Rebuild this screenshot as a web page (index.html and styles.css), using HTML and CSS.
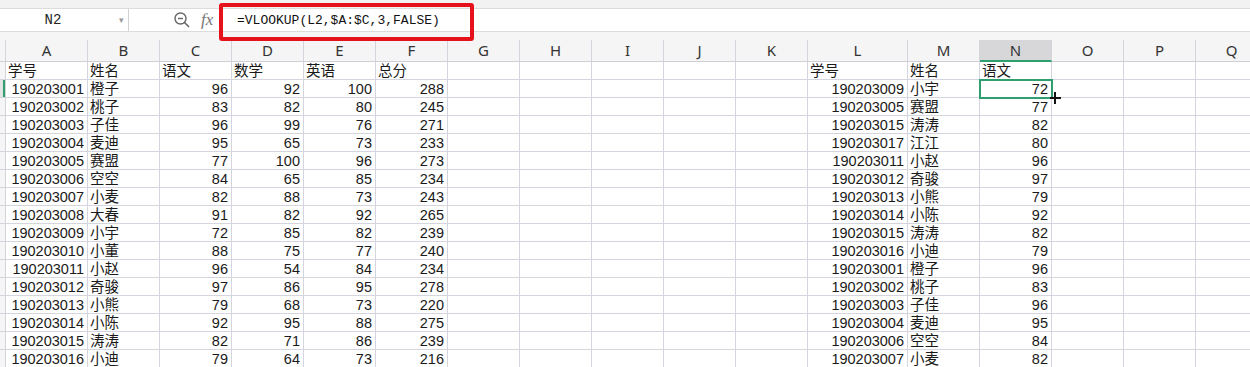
FILE: index.html
```html
<!DOCTYPE html>
<html lang="zh-CN">
<head>
    <meta charset="UTF-8">
    <meta name="viewport" content="width=device-width, initial-scale=1.0">
    <title>VLOOKUP</title>
    <link rel="stylesheet" href="styles.css">
</head>
<body>
    <div class="toolbar"></div>

    <div class="formula-row">
        <div class="name-box">
            <span class="cell-ref">N2</span>
            <span class="drop">&#9662;</span>
        </div>
        <div class="formula-tools">
            <svg class="zoom-icon" width="18" height="18" viewBox="0 0 18 18">
                <circle cx="7.5" cy="7.5" r="5.5" fill="none" stroke="#666" stroke-width="1.4"/>
                <line x1="5" y1="7.5" x2="10" y2="7.5" stroke="#666" stroke-width="1.4"/>
                <line x1="11.5" y1="11.5" x2="16" y2="16" stroke="#666" stroke-width="1.6"/>
            </svg>
            <span class="fx">fx</span>
        </div>
        <div class="formula-input">=VLOOKUP(L2,$A:$C,3,FALSE)</div>
    </div>

    <div class="head-gap"></div>

    <div id="sheet" class="sheet"></div>

    <!-- red note around the formula -->
    <div class="annotation"></div>

    <script>
        const columns = ['A','B','C','D','E','F','G','H','I','J','K','L','M','N','O','P','Q'];

        const scores = [
            ['学号','姓名','语文','数学','英语','总分'],
            [190203001,'橙子',96,92,100,288],
            [190203002,'桃子',83,82,80,245],
            [190203003,'子佳',96,99,76,271],
            [190203004,'麦迪',95,65,73,233],
            [190203005,'赛盟',77,100,96,273],
            [190203006,'空空',84,65,85,234],
            [190203007,'小麦',82,88,73,243],
            [190203008,'大春',91,82,92,265],
            [190203009,'小宇',72,85,82,239],
            [190203010,'小董',88,75,77,240],
            [190203011,'小赵',96,54,84,234],
            [190203012,'奇骏',97,86,95,278],
            [190203013,'小熊',79,68,73,220],
            [190203014,'小陈',92,95,88,275],
            [190203015,'涛涛',82,71,86,239],
            [190203016,'小迪',79,64,73,216]
        ];

        const lookup = [
            ['学号','姓名','语文'],
            [190203009,'小宇',72],
            [190203005,'赛盟',77],
            [190203015,'涛涛',82],
            [190203017,'江江',80],
            [190203011,'小赵',96],
            [190203012,'奇骏',97],
            [190203013,'小熊',79],
            [190203014,'小陈',92],
            [190203015,'涛涛',82],
            [190203016,'小迪',79],
            [190203001,'橙子',96],
            [190203002,'桃子',83],
            [190203003,'子佳',96],
            [190203004,'麦迪',95],
            [190203006,'空空',84],
            [190203007,'小麦',82]
        ];

        const sheet = document.getElementById('sheet');

        function addCell(cls, value) {
            const div = document.createElement('div');
            div.className = cls;
            if (value !== undefined && value !== '') div.textContent = value;
            sheet.appendChild(div);
            return div;
        }

        // column letters
        addCell('corner');
        columns.forEach(col => {
            addCell(col === 'N' ? 'col-head on' : 'col-head', col);
        });

        // rows
        scores.forEach((left, i) => {
            addCell(i === 1 ? 'row-head on' : 'row-head');
            const right = lookup[i] || [];
            const values = [...left, '', '', '', '', '', ...right, '', '', ''];
            values.forEach((v, c) => {
                let cls = typeof v === 'number' ? 'cell num' : 'cell';
                if (i === 1 && c === 13) cls += ' active';
                addCell(cls, v);
            });
        });
    </script>
</body>
</html>
```

FILE: styles.css
```css
* {
    box-sizing: border-box;
    margin: 0;
    padding: 0;
}

body {
    position: relative;
    width: 1250px;
    height: 367px;
    overflow: hidden;
    background: #fff;
    color: #1a1a1a;
    font-family: 'Liberation Sans', 'Noto Sans CJK SC', sans-serif;
}

.toolbar {
    height: 9px;
    background: #f2f2f2;
    border-bottom: 1px solid #dcdcdc;
}

.formula-row {
    display: flex;
    align-items: center;
    height: 23px;
    background: #fff;
    border-bottom: 1px solid #dcdcdc;
}

.name-box {
    display: flex;
    align-items: center;
    width: 129px;
    height: 100%;
    border-right: 1px solid #d2d2d2;
}

.cell-ref {
    width: 100px;
    padding-left: 6px;
    text-align: center;
    font-family: 'Liberation Mono', monospace;
    font-size: 14px;
    color: #222;
}

.drop {
    margin-left: 19px;
    font-size: 9px;
    color: #999;
}

.formula-tools {
    display: flex;
    align-items: center;
    gap: 10px;
    padding-left: 44px;
    width: 90px;
}

.zoom-icon {
    flex: none;
}

.fx {
    font-family: 'Liberation Serif', serif;
    font-style: italic;
    font-size: 17px;
    color: #777;
}

.formula-input {
    padding-left: 18px;
    font-family: 'Liberation Mono', monospace;
    font-size: 13px;
    color: #111;
}

.head-gap {
    height: 8px;
    background: #f5f5f5;
}

.sheet {
    display: grid;
    grid-template-columns: 6px 82px repeat(10, 72px) 100px repeat(5, 72px);
    grid-template-rows: 22px;
    grid-auto-rows: 18px;
}

.corner,
.col-head {
    background: #f5f5f5;
    border-right: 1px solid #d4d4dd;
    border-bottom: 1px solid #cfcfd8;
}

.col-head {
    text-align: center;
    font-family: 'Noto Sans', sans-serif;
    font-size: 15px;
    line-height: 21px;
    color: #333;
}

.col-head.on {
    background: #d7d7da;
    border-bottom: 2px solid #2f9f6f;
}

.row-head {
    background: #f5f5f5;
    border-right: 1px solid #d4d4dd;
    border-bottom: 1px solid #d4d4dd;
}

.row-head.on {
    background: #e4e4e4;
    box-shadow: inset -2px 0 0 #2f9f6f;
}

.cell {
    padding: 0 2px;
    border-right: 1px solid #d5d5e0;
    border-bottom: 1px solid #d5d5e0;
    font-size: 14.5px;
    line-height: 18px;
    white-space: nowrap;
    overflow: hidden;
}

.cell.num {
    text-align: right;
    padding-right: 3px;
}

.cell.active {
    position: relative;
    overflow: visible;
    outline: 2px solid #2f9f6f;
    outline-offset: -1px;
}

/* fill cursor */
.cell.active::before,
.cell.active::after {
    content: '';
    position: absolute;
    background: #111;
}

.cell.active::before {
    left: 70px;
    top: 17px;
    width: 11px;
    height: 2px;
}

.cell.active::after {
    left: 74px;
    top: 12px;
    width: 2px;
    height: 12px;
}

.annotation {
    position: absolute;
    left: 219px;
    top: 3px;
    width: 255px;
    height: 38px;
    border: 4px solid #e5121b;
    border-radius: 3px;
}
```
